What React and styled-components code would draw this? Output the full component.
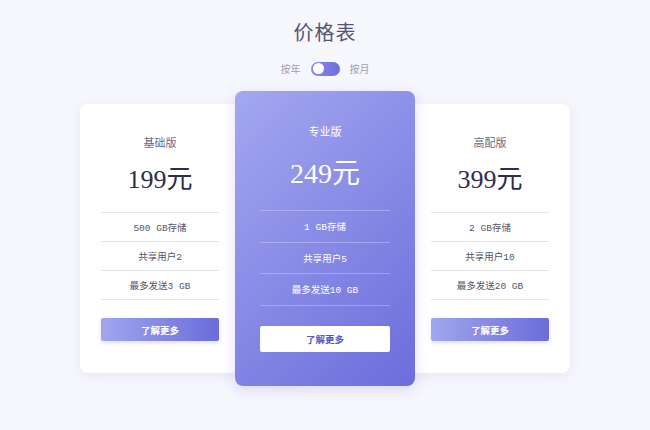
import React from "react";
import styled, { createGlobalStyle } from "styled-components";

const Global = createGlobalStyle`
  html, body { margin: 0; padding: 0; background: #f6f6fd; }
  body { font-family: "Liberation Serif", "Noto Sans CJK SC", serif; }
`;

const Page = styled.div`
  width: 650px;
  height: 430px;
  box-sizing: border-box;
  padding-top: 20px;
  display: flex;
  flex-direction: column;
  align-items: center;
  background: #f6f6fd;
`;

const Title = styled.h1`
  margin: 0;
  font-family: "Liberation Serif", "Noto Sans CJK SC", serif;
  font-size: 20px;
  font-weight: 400;
  color: #555570;
  letter-spacing: 1px;
  line-height: 26px;
`;

const ToggleRow = styled.div`
  display: flex;
  align-items: center;
  gap: 10px;
  margin-top: 15px;
  font-family: "Noto Sans CJK SC", sans-serif;
  font-size: 10px;
  color: #a0a0b4;
`;

const Switch = styled.div`
  width: 29px;
  height: 14px;
  border-radius: 7px;
  background: linear-gradient(90deg, #8b8dea, #6b6ddb);
  display: flex;
  align-items: center;
  padding: 0 2px;
  box-sizing: border-box;
`;

const Knob = styled.div`
  width: 11px;
  height: 11px;
  border-radius: 50%;
  background: #fff;
`;

const Cards = styled.div`
  display: flex;
  align-items: center;
  margin-top: 15px;
`;

const Card = styled.div`
  position: relative;
  box-sizing: border-box;
  display: flex;
  flex-direction: column;
  align-items: center;
  border-radius: 8px;
  width: ${p => (p.$featured ? 180 : 160)}px;
  height: ${p => (p.$featured ? 295 : 269)}px;
  padding: ${p => (p.$featured ? "32px 25px 0" : "30px 21px 0")};
  margin: ${p => (p.$featured ? "0 -5px" : "0")};
  z-index: ${p => (p.$featured ? 1 : 0)};
  background: ${p =>
    p.$featured ? "linear-gradient(135deg, #a4a7f0 0%, #6c6ddb 100%)" : "#ffffff"};
  box-shadow: ${p =>
    p.$featured
      ? "0 4px 14px rgba(90, 90, 200, 0.18)"
      : "0 3px 12px rgba(120, 120, 180, 0.12)"};
  color: ${p => (p.$featured ? "#ffffff" : "#3a3a55")};
`;

const PlanName = styled.div`
  font-family: "Noto Sans CJK SC", sans-serif;
  font-size: 11px;
  line-height: 16px;
  color: ${p => (p.$featured ? "#ffffff" : "#6a6a80")};
`;

const Price = styled.div`
  font-family: "Liberation Serif", "Noto Sans CJK SC", serif;
  font-size: ${p => (p.$featured ? 28 : 26)}px;
  line-height: 32px;
  margin-top: ${p => (p.$featured ? 19 : 14)}px;
  color: ${p => (p.$featured ? "#ffffff" : "#2e2e4a")};
`;

const Features = styled.ul`
  list-style: none;
  margin: ${p => (p.$featured ? 20 : 16)}px 0 0;
  padding: 0;
  width: 100%;
  border-top: 1.5px solid ${p => (p.$featured ? "rgba(255,255,255,0.28)" : "#e6e6ea")};
`;

const Feature = styled.li`
  height: ${p => (p.$featured ? 30.5 : 28)}px;
  display: flex;
  align-items: center;
  justify-content: center;
  font-family: "Liberation Mono", "Noto Sans CJK SC", monospace;
  font-size: 9.5px;
  color: ${p => (p.$featured ? "#ffffff" : "#55556a")};
  border-bottom: 1.5px solid ${p => (p.$featured ? "rgba(255,255,255,0.28)" : "#e6e6ea")};
`;

const Button = styled.button`
  margin-top: ${p => (p.$featured ? 20 : 18)}px;
  width: 100%;
  height: ${p => (p.$featured ? 26 : 23)}px;
  border: none;
  border-radius: 2px;
  font-family: "Noto Sans CJK SC", sans-serif;
  font-weight: 700;
  font-size: 9.5px;
  cursor: pointer;
  color: ${p => (p.$featured ? "#5557c8" : "#ffffff")};
  background: ${p =>
    p.$featured ? "#ffffff" : "linear-gradient(90deg, #a2a5ee 0%, #6a6cda 100%)"};
  box-shadow: ${p => (p.$featured ? "none" : "0 2px 4px rgba(100, 100, 210, 0.2)")};
`;

const plans = [
  { name: "基础版", price: "199元", features: ["500 GB存储", "共享用户2", "最多发送3 GB"] },
  { name: "专业版", price: "249元", features: ["1 GB存储", "共享用户5", "最多发送10 GB"], featured: true },
  { name: "高配版", price: "399元", features: ["2 GB存储", "共享用户10", "最多发送20 GB"] },
];

export default function App() {
  return (
    <Page>
      <Global />
      <Title>价格表</Title>
      <ToggleRow>
        <span>按年</span>
        <Switch>
          <Knob />
        </Switch>
        <span>按月</span>
      </ToggleRow>
      <Cards>
        {plans.map(p => (
          <Card key={p.name} $featured={p.featured}>
            <PlanName $featured={p.featured}>{p.name}</PlanName>
            <Price $featured={p.featured}>{p.price}</Price>
            <Features $featured={p.featured}>
              {p.features.map(f => (
                <Feature key={f} $featured={p.featured}>{f}</Feature>
              ))}
            </Features>
            <Button $featured={p.featured}>了解更多</Button>
          </Card>
        ))}
      </Cards>
    </Page>
  );
}
